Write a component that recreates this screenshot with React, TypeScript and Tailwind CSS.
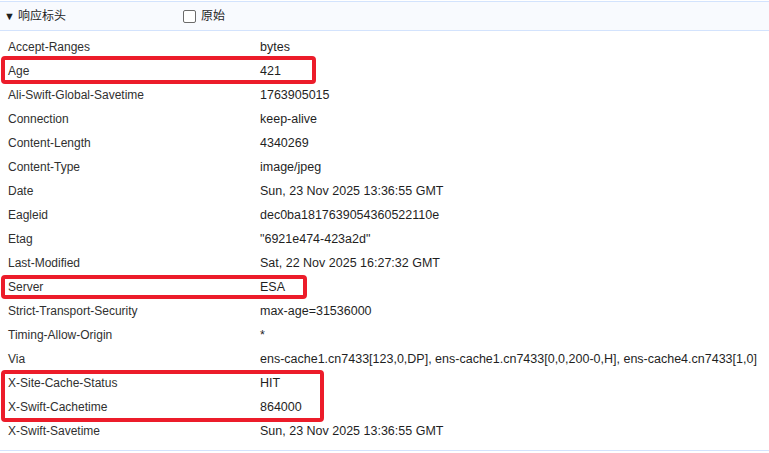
const HEADERS = [
  { name: 'Accept-Ranges', value: 'bytes' },
  { name: 'Age', value: '421' },
  { name: 'Ali-Swift-Global-Savetime', value: '1763905015' },
  { name: 'Connection', value: 'keep-alive' },
  { name: 'Content-Length', value: '4340269' },
  { name: 'Content-Type', value: 'image/jpeg' },
  { name: 'Date', value: 'Sun, 23 Nov 2025 13:36:55 GMT' },
  { name: 'Eagleid', value: 'dec0ba1817639054360522110e' },
  { name: 'Etag', value: '"6921e474-423a2d"' },
  { name: 'Last-Modified', value: 'Sat, 22 Nov 2025 16:27:32 GMT' },
  { name: 'Server', value: 'ESA' },
  { name: 'Strict-Transport-Security', value: 'max-age=31536000' },
  { name: 'Timing-Allow-Origin', value: '*' },
  { name: 'Via', value: 'ens-cache1.cn7433[123,0,DP], ens-cache1.cn7433[0,0,200-0,H], ens-cache4.cn7433[1,0]' },
  { name: 'X-Site-Cache-Status', value: 'HIT' },
  { name: 'X-Swift-Cachetime', value: '864000' },
  { name: 'X-Swift-Savetime', value: 'Sun, 23 Nov 2025 13:36:55 GMT' },
];

// red annotation boxes drawn over the table
const MARKS = [
  'left-[1px] top-[56px] w-[315px] h-[28px]',
  'left-[1px] top-[275px] w-[306px] h-[24px]',
  'left-[1px] top-[370px] w-[323px] h-[52px]',
];

export default function App() {
  return (
    <div
      className="relative w-[769px] h-[453px] bg-white overflow-hidden text-[12px] text-[#1f1f1f]"
      style={{ fontFamily: '"Liberation Sans", "Noto Sans CJK SC", sans-serif' }}
    >
      <div className="mt-[1px] h-[30px] flex items-center border-y border-[#d3e3fd] bg-[#f8fafe]">
        <span className="ml-[4px] w-[9px] text-[11px] leading-none">▼</span>
        <span className="ml-[5px]">响应标头</span>
        <span className="ml-[117px] w-[13px] h-[13px] rounded-[2px] border border-[#6b6b6b] bg-white" />
        <span className="ml-[5px]">原始</span>
      </div>
      <div className="pt-[4px] pb-[7px] border-b border-[#d3e3fd]">
        {HEADERS.map(({ name, value }) => (
          <div key={name} className="h-[24px] flex items-center whitespace-nowrap">
            <span className="w-[260px] pl-[8px] shrink-0 text-[#303030]">{name}</span>
            <span className="text-[12.5px] text-[#1f1f1f]">{value}</span>
          </div>
        ))}
      </div>
      {MARKS.map((cls) => (
        <div key={cls} className={`absolute ${cls} border-[4px] border-[#ec1c2a] rounded-[4px]`} />
      ))}
    </div>
  );
}
